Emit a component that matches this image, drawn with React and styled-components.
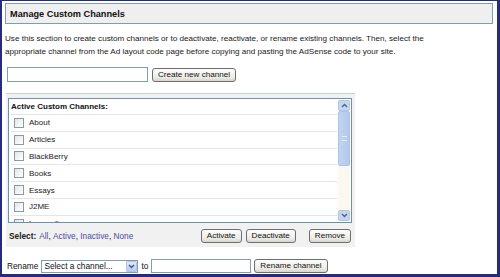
import React from "react";
import styled, { createGlobalStyle } from "styled-components";

const Global = createGlobalStyle`
  html, body { margin: 0; padding: 0; background: #ffffff; }
  body { font-family: "Liberation Sans", Arial, sans-serif; color: #111; }
  * { box-sizing: border-box; }
`;

const Frame = styled.div`
  width: 500px;
  height: 277px;
  border-style: solid;
  border-color: #262b7e;
  border-width: 1px 3px 3px 2px;
  background: #ffffff;
  overflow: hidden;
  display: flex;
  flex-direction: column;
`;

const TitleBar = styled.div`
  margin: 2px 4px 0 3px;
  height: 21px;
  background: #efefef;
  border: 1px solid #7e9db4;
  display: flex;
  align-items: center;
  padding-left: 4px;
  font-size: 9.2px;
  font-weight: bold;
  color: #111;
`;

const Intro = styled.p`
  margin: 8px 0 0 3px;
  font-size: 8.1px;
  line-height: 13px;
  color: #1a1a1a;
  white-space: nowrap;
`;

const Row = styled.div`
  display: flex;
  align-items: center;
  gap: ${(p) => p.$gap || 4}px;
  margin: ${(p) => p.$margin || "0"};
  font-size: 8.3px;
`;

const TextInput = styled.input`
  width: ${(p) => p.$w}px;
  height: ${(p) => p.$h || 15}px;
  border: 1px solid #7f9db9;
  background: #fff;
  padding: 0 2px;
  margin: 0;
  outline: none;
`;

const Button = styled.button`
  height: 14px;
  padding: 0 5px;
  margin: 0;
  border: 1px solid #6e6e6e;
  border-radius: 3px;
  background: linear-gradient(#fdfdfd, #ecebe6 70%, #d8d6cd);
  font-family: "Liberation Sans", Arial, sans-serif;
  font-size: 8.1px;
  color: #111;
  line-height: 12px;
  white-space: nowrap;
`;

const Panel = styled.div`
  margin: 11px 0 0 4px;
  width: 349px;
  height: 154px;
  background: #f1f1f1;
  border-top: 1px solid #c5d2dc;
  padding: 4px 3px 0 2px;
  display: flex;
  flex-direction: column;
`;

const ListBox = styled.div`
  height: 125px;
  border: 1px solid #6f90a9;
  background: #ffffff;
  display: flex;
  overflow: hidden;
`;

const Rows = styled.div`
  flex: 1;
  overflow: hidden;
  padding-left: 2px;
`;

const ListHeader = styled.div`
  height: 15px;
  display: flex;
  align-items: center;
  font-size: 8px;
  font-weight: bold;
  color: #111;
`;

const ChannelRow = styled.div`
  height: 16.8px;
  display: flex;
  align-items: center;
  gap: 5px;
  padding-left: 3px;
  border-top: 1px solid #e6e6e6;
  font-size: 8px;
  color: #1a1a1a;
  margin-right: 1px;
`;

const Check = styled.span`
  width: 10px;
  height: 10px;
  border: 1px solid #8a9aa8;
  background: linear-gradient(135deg, #e6e6e0, #ffffff);
  flex: none;
`;

const Scrollbar = styled.div`
  width: 12px;
  margin: 1px 1px 1px 0;
  display: flex;
  flex-direction: column;
  background: #fbf8ef;
`;

const ScrollBtn = styled.div`
  height: 11px;
  background: #c6d6ef;
  border: 1px solid #b2c6e6;
  border-radius: 2px;
  display: flex;
  align-items: center;
  justify-content: center;
`;

const Thumb = styled.div`
  height: 55px;
  background: linear-gradient(90deg, #c3d4f1, #b4c8ec);
  border: 1px solid #adc2e6;
  border-radius: 2px;
  display: flex;
  align-items: center;
  justify-content: center;
`;

const Track = styled.div`
  flex: 1;
`;

const Grip = styled.div`
  width: 5px;
  height: 5px;
  border-top: 1px solid #e8eefa;
  border-bottom: 1px solid #e8eefa;
`;

const SelectBar = styled.div`
  flex: 1;
  display: flex;
  align-items: center;
  padding: 2px 0 0 1px;
  font-size: 8.3px;
`;

const SelectLabel = styled.span`
  font-weight: bold;
  margin-right: 3px;
  color: #222;
`;

const Link = styled.a`
  color: #4b4ba3;
  text-decoration: none;
`;

const Actions = styled.div`
  margin-left: auto;
  display: flex;
  gap: 4px;
  margin-right: 1px;
`;

const Spacer = styled.span`
  width: ${(p) => p.$w}px;
`;

const FakeSelect = styled.div`
  width: 97px;
  height: 13px;
  border: 1px solid #7f9db9;
  background: #fff;
  display: flex;
  align-items: center;
  justify-content: space-between;
  padding-left: 2px;
  font-size: 8.3px;
`;

const DropBtn = styled.div`
  width: 11px;
  height: 11px;
  background: linear-gradient(#dfe8fb, #b8cbf2);
  border: 1px solid #b0c3ea;
  border-radius: 1px;
  display: flex;
  align-items: center;
  justify-content: center;
`;

const Chevron = ({ dir = "down", color = "#4d6185" }) => (
  <svg width="7" height="5" viewBox="0 0 7 5">
    <path
      d={dir === "down" ? "M1 1 L3.5 3.5 L6 1" : "M1 4 L3.5 1.5 L6 4"}
      fill="none"
      stroke={color}
      strokeWidth="1.4"
    />
  </svg>
);

const channels = ["About", "Articles", "BlackBerry", "Books", "Essays", "J2ME", "Lowcrafts"];

export default function App() {
  return (
    <>
      <Global />
      <Frame>
        <TitleBar>Manage Custom Channels</TitleBar>
        <Intro>
          Use this section to create custom channels or to deactivate, reactivate, or rename existing channels. Then, select the
          <br />
          appropriate channel from the Ad layout code page before copying and pasting the AdSense code to your site.
        </Intro>
        <Row $margin="9px 0 0 5px" $gap={4}>
          <TextInput $w={141} />
          <Button>Create new channel</Button>
        </Row>
        <Panel>
          <ListBox>
            <Rows>
              <ListHeader>Active Custom Channels:</ListHeader>
              {channels.map((c) => (
                <ChannelRow key={c}>
                  <Check />
                  {c}
                </ChannelRow>
              ))}
            </Rows>
            <Scrollbar>
              <ScrollBtn>
                <Chevron dir="up" />
              </ScrollBtn>
              <Thumb>
                <Grip />
              </Thumb>
              <Track />
              <ScrollBtn>
                <Chevron dir="down" />
              </ScrollBtn>
            </Scrollbar>
          </ListBox>
          <SelectBar>
            <SelectLabel>Select:</SelectLabel>
            <Link href="#">All</Link>,&nbsp;
            <Link href="#">Active</Link>,&nbsp;
            <Link href="#">Inactive</Link>,&nbsp;
            <Link href="#">None</Link>
            <Actions>
              <Button>Activate</Button>
              <Button>Deactivate</Button>
              <Spacer $w={5} />
              <Button>Remove</Button>
            </Actions>
          </SelectBar>
        </Panel>
        <Row $margin="12px 0 0 5px" $gap={3}>
          <span>Rename</span>
          <FakeSelect>
            Select a channel...
            <DropBtn>
              <Chevron dir="down" color="#3c5289" />
            </DropBtn>
          </FakeSelect>
          <span>to</span>
          <TextInput $w={100} $h={14} />
          <Button>Rename channel</Button>
        </Row>
      </Frame>
    </>
  );
}
